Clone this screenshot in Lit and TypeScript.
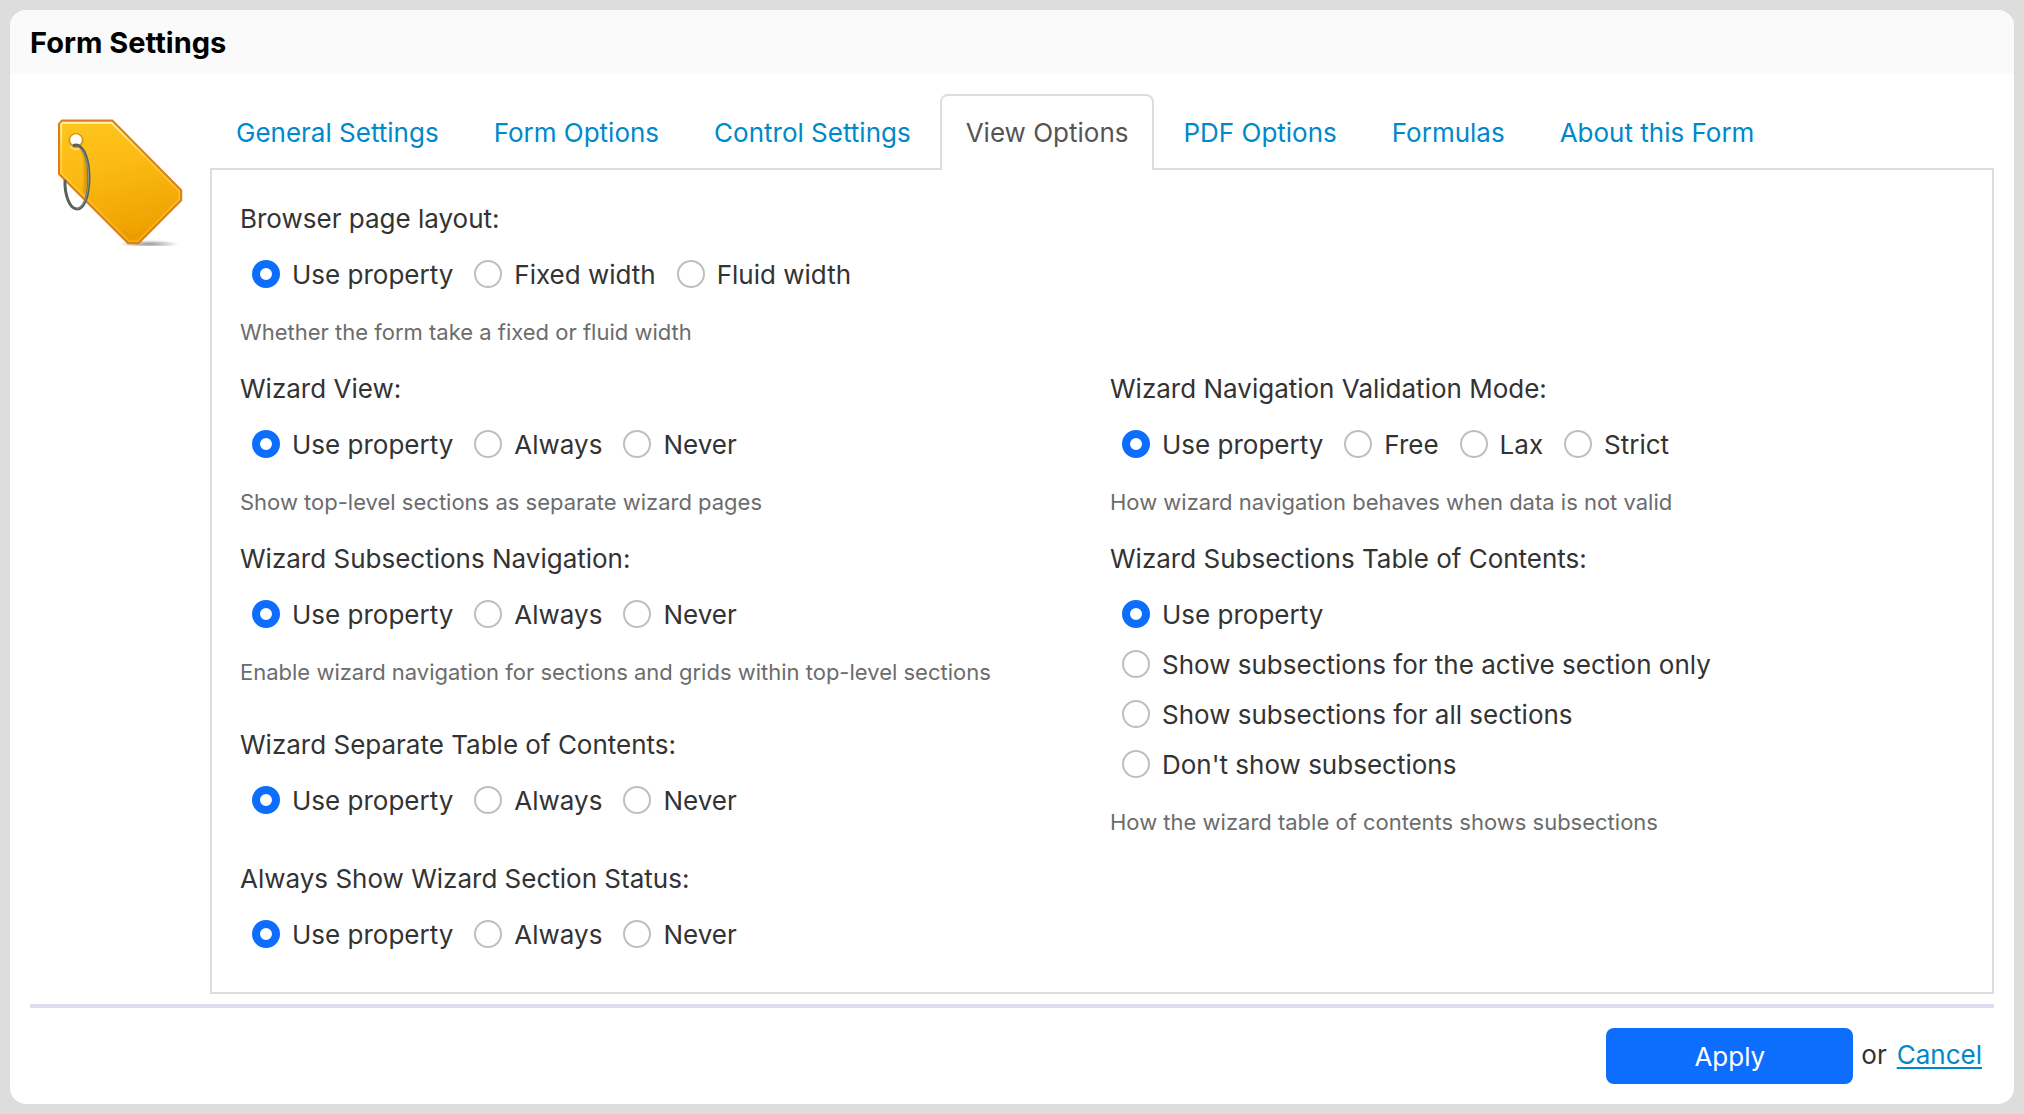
import { LitElement, html, css, nothing } from "lit";
import { customElement, property, state } from "lit/decorators.js";
import { classMap } from "lit/directives/class-map.js";

interface Setting {
  name: string;
  label: string;
  options: string[];
  help?: string;
  layout?: "wide" | "tall";
}

const TABS = [
  "General Settings",
  "Form Options",
  "Control Settings",
  "View Options",
  "PDF Options",
  "Formulas",
  "About this Form",
];

const SETTINGS: Setting[] = [
  {
    name: "page-layout",
    label: "Browser page layout:",
    options: ["Use property", "Fixed width", "Fluid width"],
    help: "Whether the form take a fixed or fluid width",
    layout: "wide",
  },
  {
    name: "wizard-view",
    label: "Wizard View:",
    options: ["Use property", "Always", "Never"],
    help: "Show top-level sections as separate wizard pages",
  },
  {
    name: "wizard-validation",
    label: "Wizard Navigation Validation Mode:",
    options: ["Use property", "Free", "Lax", "Strict"],
    help: "How wizard navigation behaves when data is not valid",
  },
  {
    name: "wizard-subsections-nav",
    label: "Wizard Subsections Navigation:",
    options: ["Use property", "Always", "Never"],
    help: "Enable wizard navigation for sections and grids within top-level sections",
  },
  {
    name: "wizard-subsections-toc",
    label: "Wizard Subsections Table of Contents:",
    options: [
      "Use property",
      "Show subsections for the active section only",
      "Show subsections for all sections",
      "Don't show subsections",
    ],
    help: "How the wizard table of contents shows subsections",
    layout: "tall",
  },
  {
    name: "wizard-separate-toc",
    label: "Wizard Separate Table of Contents:",
    options: ["Use property", "Always", "Never"],
  },
  {
    name: "wizard-section-status",
    label: "Always Show Wizard Section Status:",
    options: ["Use property", "Always", "Never"],
  },
];

@customElement("tag-icon")
export class TagIcon extends LitElement {
  static styles = css`
    :host {
      display: block;
    }
    .art {
      display: block;
      width: 128px;
      height: 128px;
    }
  `;

  render() {
    return html`
      <svg class="art" viewBox="0 0 128 128" aria-hidden="true">
        <defs>
          <linearGradient id="body" x1="0" y1="0" x2="0.25" y2="1">
            <stop offset="0" stop-color="#ffc61e" />
            <stop offset="0.45" stop-color="#fbba14" />
            <stop offset="1" stop-color="#eea200" />
          </linearGradient>
          <linearGradient id="shine" x1="0" y1="0" x2="0" y2="1">
            <stop offset="0" stop-color="#fff0b8" />
            <stop offset="0.3" stop-color="#ffd65a" stop-opacity="0.7" />
            <stop offset="1" stop-color="#ffc61e" stop-opacity="0.4" />
          </linearGradient>
          <radialGradient id="ground">
            <stop offset="0" stop-color="#000" stop-opacity="0.4" />
            <stop offset="0.6" stop-color="#000" stop-opacity="0.16" />
            <stop offset="1" stop-color="#000" stop-opacity="0" />
          </radialGradient>
          <linearGradient id="fold" x1="0" y1="0" x2="1" y2="0">
            <stop offset="0" stop-color="#c98a00" stop-opacity="0" />
            <stop offset="1" stop-color="#b67a00" stop-opacity="0.65" />
          </linearGradient>
        </defs>
        <ellipse cx="93" cy="126" rx="30" ry="4" fill="url(#ground)" />
        <path
          d="M6 2.6H56.5L125.2 72.3V82.2L82.4 125.2H72.2L3 56V6Z"
          fill="url(#body)"
          stroke="#da7e18"
          stroke-width="2"
          stroke-linejoin="round"
        />
        <path
          d="M6.6 4.8H55.6L123.2 73V81.4L81.6 123.2H73L5.2 55.2V6.2Z"
          fill="none"
          stroke="url(#shine)"
          stroke-width="1.8"
        />
        <path d="M64 110L75 116H80L91 110L81.5 122.5H73.5Z" fill="#e89500" opacity="0.5" />
        <path d="M22 29C27 34 29 48 27 74L32 78C34 58 33 36 24 28Z" fill="url(#fold)" />
        <circle cx="20" cy="22.5" r="7.6" fill="#dc9710" />
        <circle cx="20" cy="22" r="5.8" fill="#fff" />
        <path d="M14 28Q20 35 26 28" fill="none" stroke="#ffdf80" stroke-width="1.6" />
        <path
          d="M17 28C25 23 33 38 33 59C33 78 28 91 21 91C14 91 8.5 78 9 62"
          fill="none"
          stroke="#56625f"
          stroke-width="3"
        />
        <path
          d="M25 31C30 37 32.6 48 32.6 59C32.6 76 28 90 21 90.4"
          fill="none"
          stroke="#98a39d"
          stroke-width="0.8"
        />
      </svg>
    `;
  }
}

@customElement("radio-setting")
export class RadioSetting extends LitElement {
  @property({ attribute: false }) setting!: Setting;

  static styles = css`
    :host {
      display: block;
    }
    .group {
      margin: 0;
      padding: 0 0 22px;
      border: 0;
      min-width: 0;
    }
    .label {
      display: block;
      padding: 0;
      margin-bottom: 15px;
      line-height: 40px;
    }
    .options {
      display: flex;
      flex-wrap: wrap;
      gap: 9px 21px;
      padding-left: 12px;
    }
    .stacked {
      flex-direction: column;
      align-items: flex-start;
    }
    .option {
      display: flex;
      align-items: flex-start;
      gap: 12px;
      line-height: 41px;
    }
    .radio {
      appearance: none;
      box-sizing: border-box;
      width: 28px;
      height: 28px;
      margin: 6px 0 0;
      border: 2px solid #bfbfbf;
      border-radius: 50%;
      background: #fff;
    }
    .radio:checked {
      border: 8px solid #0d6efd;
    }
    .help {
      margin: 22px 0 0;
      color: #6c6c6c;
      font-size: 22px;
      line-height: 30px;
    }
  `;

  render() {
    const { name, label, options, help, layout } = this.setting;
    return html`
      <fieldset class="group">
        <legend class="label">${label}</legend>
        <div class=${classMap({ options: true, stacked: layout === "tall" })}>
          ${options.map(
            (text, i) => html`
              <label class="option">
                <input class="radio" type="radio" name=${name} value=${text} ?checked=${i === 0} />
                <span>${text}</span>
              </label>
            `,
          )}
        </div>
        ${help ? html`<p class="help">${help}</p>` : nothing}
      </fieldset>
    `;
  }
}

@customElement("app-root")
export class AppRoot extends LitElement {
  @state() private active = "View Options";

  static styles = css`
    :host {
      display: block;
      box-sizing: border-box;
      min-height: 100vh;
      padding: 10px;
      background: #ddd;
      color: #333;
      font-family: Inter, "Liberation Sans", sans-serif;
      font-size: 26px;
    }
    .dialog {
      border-radius: 16px;
      background: #fff;
      overflow: hidden;
    }
    .title {
      margin: 0;
      padding: 13px 20px 11px;
      background: #fafafa;
      color: #000;
      font-size: 29px;
      font-weight: 700;
      line-height: 40px;
    }
    .body {
      display: grid;
      grid-template-columns: 180px minmax(0, 1fr);
      margin: 20px 20px 0;
      padding-bottom: 10px;
      border-bottom: 4px solid #dde;
    }
    .icon {
      padding: 24px 26px;
    }
    .tabs {
      display: flex;
      gap: 3px;
      position: relative;
      z-index: 1;
      margin: 0 0 -2px;
      padding: 0;
      list-style: none;
    }
    .tab {
      display: block;
      padding: 16px 24px;
      border: 2px solid transparent;
      border-bottom: 0;
      border-radius: 8px 8px 0 0;
      color: #08c;
      line-height: 42px;
      white-space: nowrap;
      text-decoration: none;
    }
    .selected {
      border-color: #ddd;
      background: #fff;
      color: #555;
    }
    .panel {
      display: grid;
      grid-template-columns: repeat(2, minmax(0, 1fr));
      column-gap: 16px;
      padding: 29px 28px 15px;
      border: 2px solid #ddd;
    }
    .wide {
      grid-column: 1 / -1;
    }
    .tall {
      grid-row: span 2;
    }
    .footer {
      display: flex;
      align-items: center;
      justify-content: flex-end;
      gap: 8px;
      padding: 20px 32px;
    }
    .note {
      padding-bottom: 4px;
    }
    .apply {
      width: 247px;
      height: 56px;
      border: 0;
      border-radius: 8px;
      background: #0d6efd;
      color: #fff;
      font: inherit;
    }
    .cancel {
      margin-left: 2px;
      color: #08c;
      text-decoration-thickness: 2px;
      text-underline-offset: 3px;
    }
  `;

  private select(event: Event, tab: string) {
    event.preventDefault();
    this.active = tab;
  }

  render() {
    return html`
      <main class="dialog">
        <h1 class="title">Form Settings</h1>
        <div class="body">
          <div class="icon"><tag-icon></tag-icon></div>
          <div>
            <ul class="tabs">
              ${TABS.map(
                (tab) => html`
                  <li>
                    <a
                      class=${classMap({ tab: true, selected: tab === this.active })}
                      href="#"
                      aria-current=${tab === this.active ? "page" : "false"}
                      @click=${(e: Event) => this.select(e, tab)}
                      >${tab}</a
                    >
                  </li>
                `,
              )}
            </ul>
            <section class="panel">
              ${SETTINGS.map(
                (s) => html`<radio-setting class=${s.layout ?? ""} .setting=${s}></radio-setting>`,
              )}
            </section>
          </div>
        </div>
        <div class="footer">
          <button class="apply" type="button">Apply</button>
          <span class="note">or</span>
          <a class="cancel note" href="#">Cancel</a>
        </div>
      </main>
    `;
  }
}
